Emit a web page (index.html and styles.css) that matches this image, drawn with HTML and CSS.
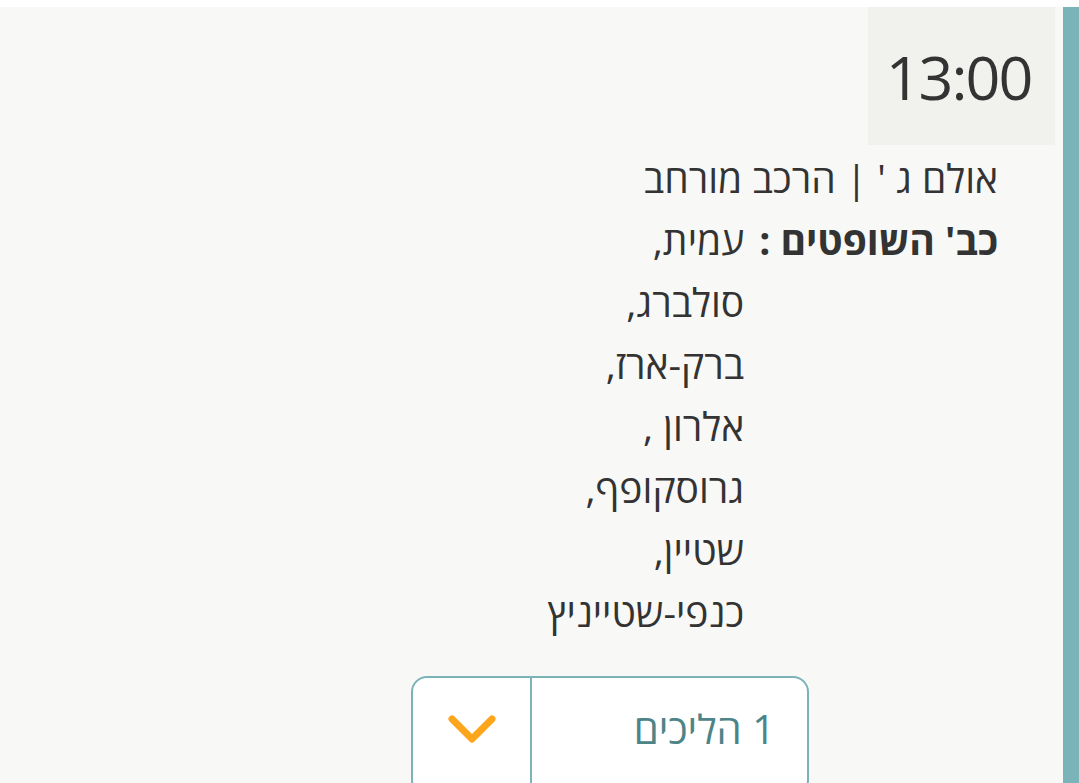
FILE: index.html
```html
<!DOCTYPE html>
<html lang="he" dir="rtl">
<head>
<meta charset="UTF-8">
<meta name="viewport" content="width=device-width, initial-scale=1.0">
<title>דיון</title>
<link rel="stylesheet" href="styles.css">
</head>
<body>

<div class="hearing">
  <div class="time">13:00</div>
  <div class="details">
    <div class="hall">אולם ג ' | הרכב מורחב</div>
    <div class="judges">
      <span class="label">כב' השופטים :</span>
      <div class="names">
        <div>עמית,</div>
        <div>סולברג,</div>
        <div>ברק-ארז,</div>
        <div>אלרון ,</div>
        <div>גרוסקופף,</div>
        <div>שטיין,</div>
        <div>כנפי-שטייניץ</div>
      </div>
    </div>
  </div>
  <div class="cases">
    <span class="cases-text">1 הליכים</span>
    <span class="toggle">
      <svg width="52" height="32" viewBox="0 0 52 32">
        <polyline points="6,6 26,26 46,6" fill="none" stroke="#fda61b" stroke-width="7" stroke-linecap="round" stroke-linejoin="round"/>
      </svg>
    </span>
  </div>
</div>

</body>
</html>
```

FILE: styles.css
```css
body {
  margin: 0;
  padding: 7px 0 0;
  background-color: #ffffff;
  font-family: "Open Sans", "DejaVu Sans", sans-serif;
  color: #333333;
}
.hearing {
  background-color: #f8f8f6;
  border-right: 16px solid #7ab3b8;
  height: 776px;
  overflow: hidden;
  padding-right: 8px;
}
.time {
  width: 187px;
  height: 138px;
  box-sizing: border-box;
  padding: 2px 6px 0 0;
  background-color: #f1f1ee;
  font-size: 61px;
  line-height: 135px;
  letter-spacing: -2px;
  text-align: center;
  color: #333333;
}
.details {
  padding-right: 57px;
  margin-top: 2px;
  font-size: 39px;
  line-height: 62px;
}
.judges {
  display: flex;
  gap: 15px;
}
.label {
  font-weight: 700;
}
.cases {
  display: flex;
  width: 398px;
  height: 120px;
  box-sizing: border-box;
  margin-top: 33px;
  margin-right: 246px;
  border: 2px solid #7ab3b8;
  border-radius: 16px;
  background-color: #ffffff;
}
.cases-text {
  flex: 1;
  padding: 20px 32px 0 0;
  font-size: 40px;
  line-height: 62px;
  color: #4d8488;
}
.toggle {
  width: 117px;
  border-right: 2px solid #7ab3b8;
  display: flex;
  justify-content: center;
  padding-top: 35px;
}
.toggle svg {
  display: block;
}
```
